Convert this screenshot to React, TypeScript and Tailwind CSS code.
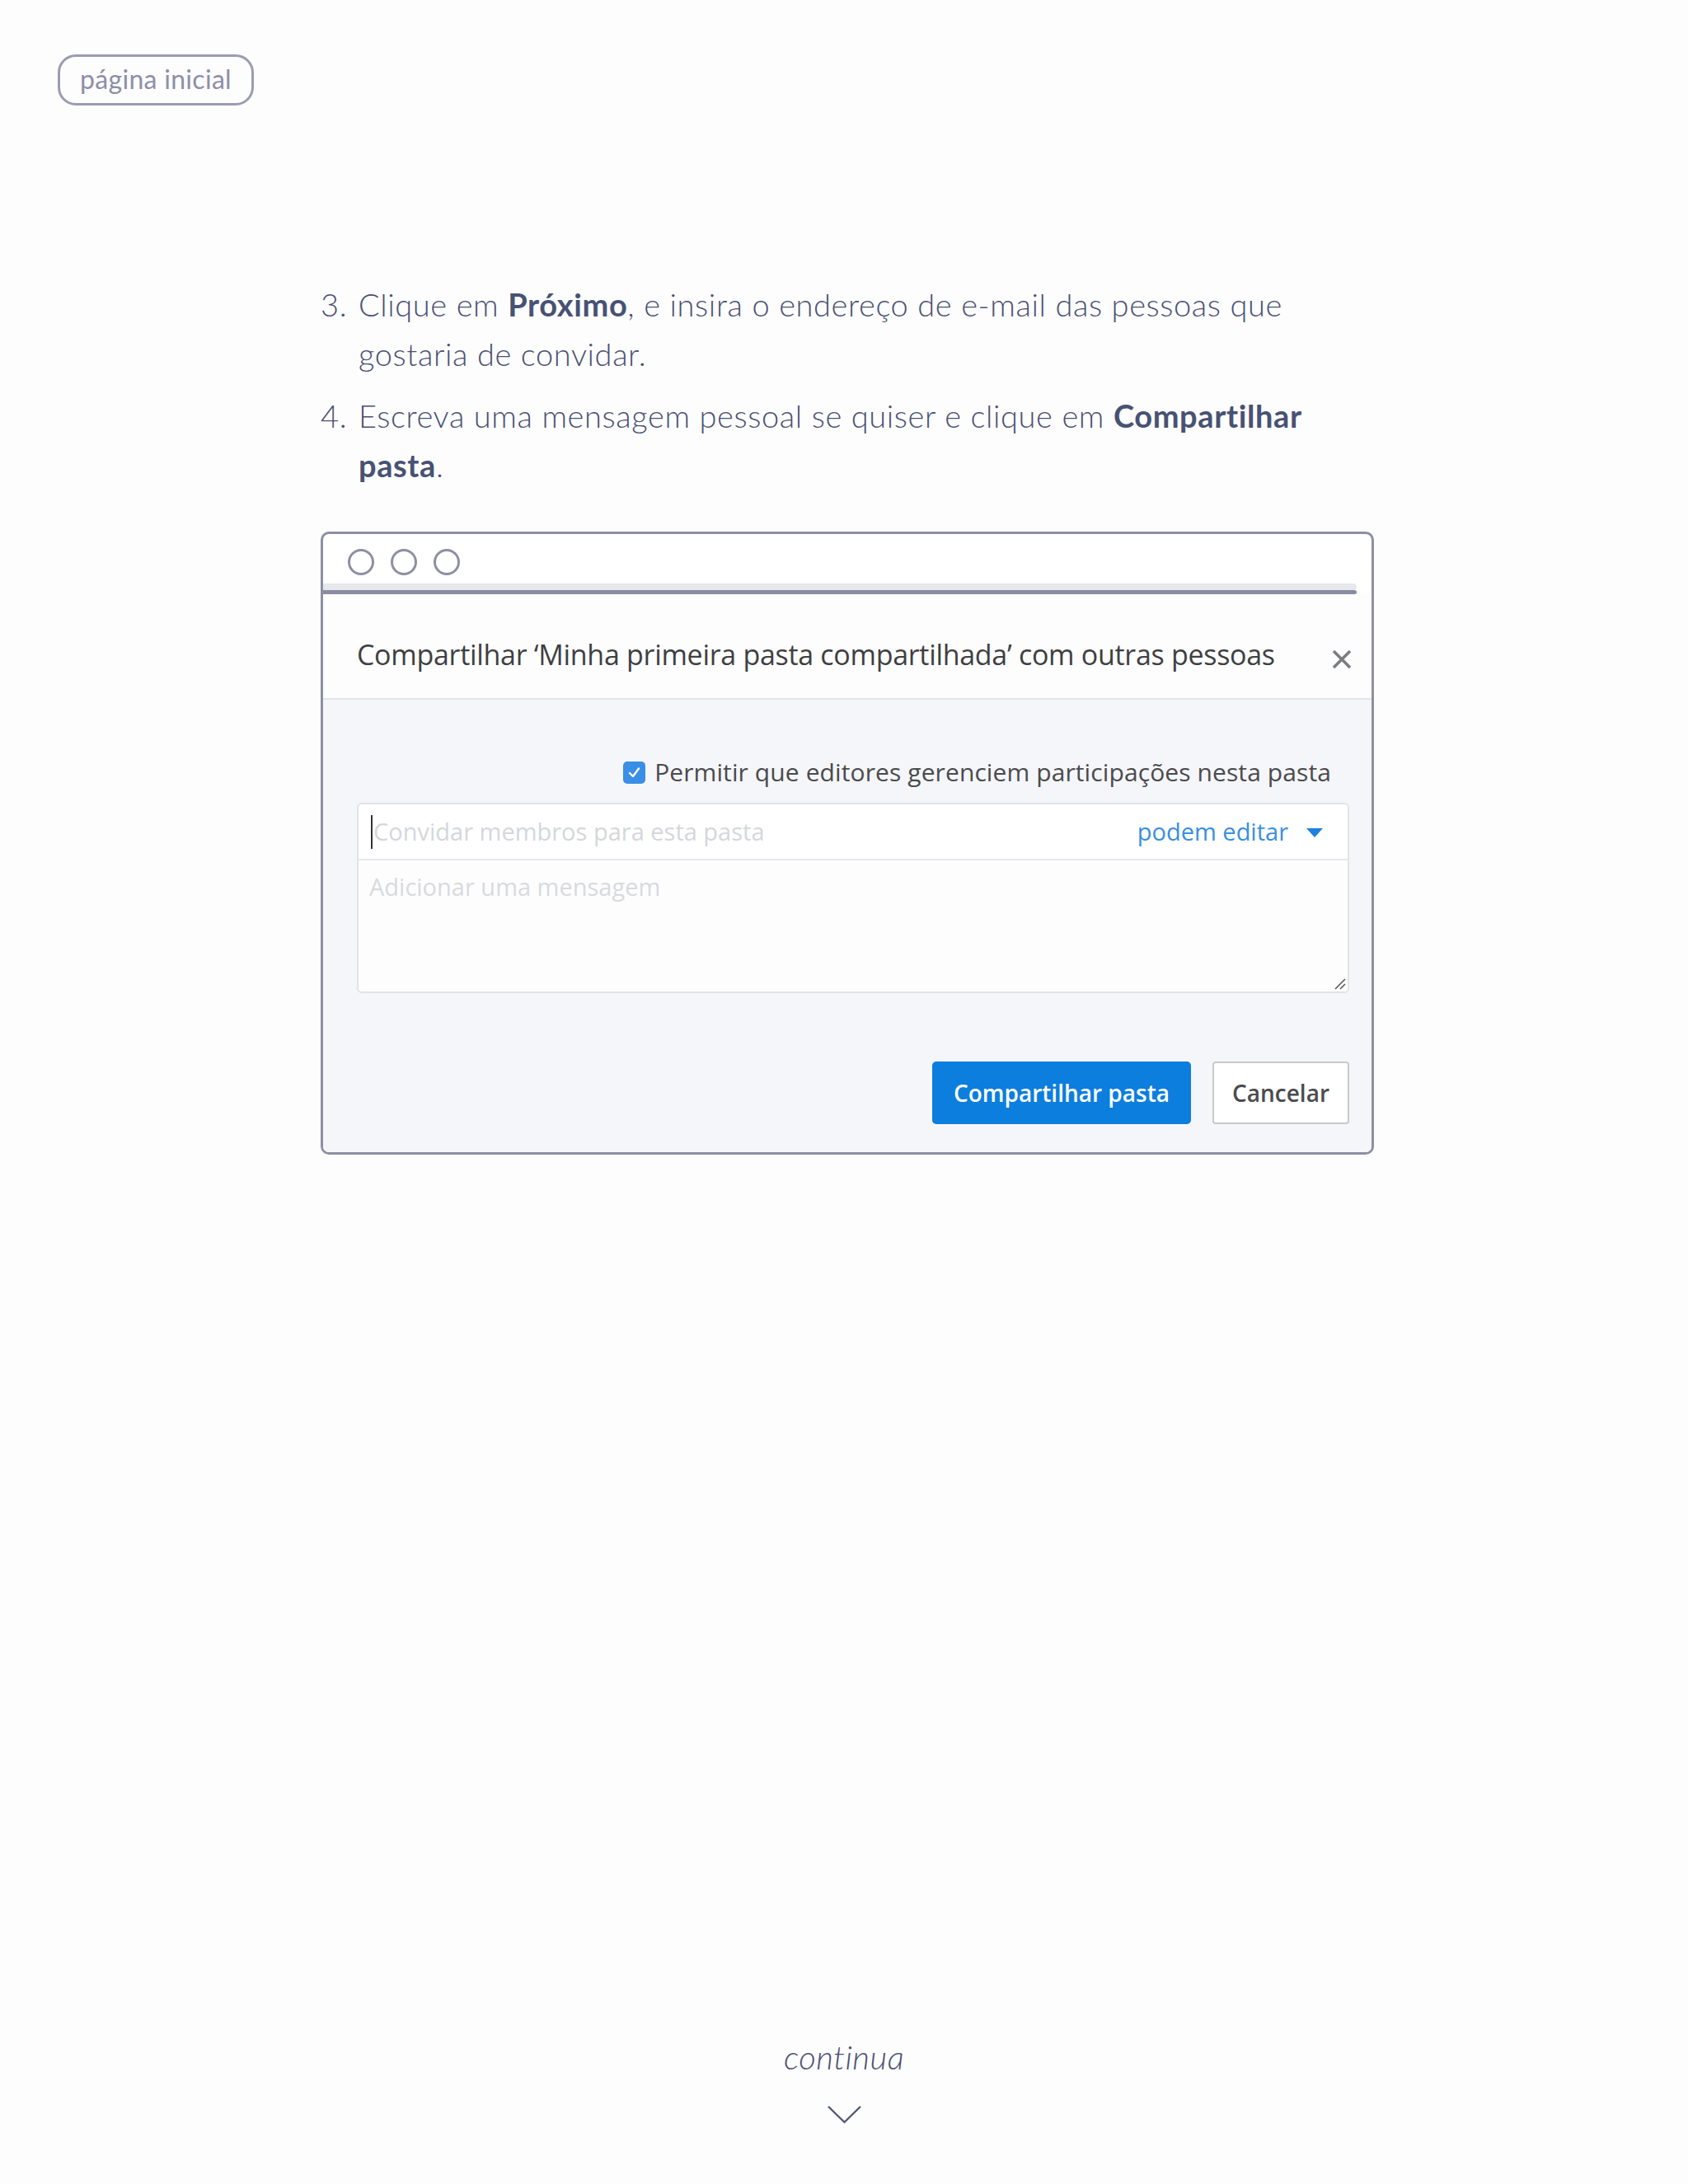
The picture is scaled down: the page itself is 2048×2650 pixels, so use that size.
import React from "react";

const SANS = "font-['Lato','Liberation_Sans',sans-serif]";
const OPEN = "font-['Open_Sans','Liberation_Sans',sans-serif]";

function WindowDots() {
  return (
    <div className="flex items-center gap-[20px] h-[60px] pt-[8px] pl-[30px]">
      {[0, 1, 2].map((i) => (
        <div key={i} className="w-[32px] h-[32px] rounded-full border-[3px] border-[#8e8fa3]" />
      ))}
    </div>
  );
}

function ShareDialog() {
  return (
    <div className={`${OPEN} w-[1278px] border-[3px] border-[#8e8fa3] rounded-[10px] bg-white overflow-hidden`}>
      <WindowDots />
      <div className="h-[8px] bg-[#e7e8ec] mr-[18px] rounded-r-full" />
      <div className="h-[5px] bg-[#8a8ca1] mr-[18px] rounded-r-full" />

      {/* header */}
      <div className="flex items-start justify-between bg-[#fdfdfe] pl-[41px] pr-[24px] pt-[50px] pb-[30px] border-b-2 border-[#e3e5e9]">
        <h2 className="text-[34px] leading-[46px] tracking-[-0.3px] text-[#3f3f42]">
          Compartilhar ‘Minha primeira pasta compartilhada’ com outras pessoas
        </h2>
        <svg className="mt-[17px]" width="24" height="24" viewBox="0 0 24 24">
          <path d="M2 2 L22 22 M22 2 L2 22" stroke="#7b7c80" strokeWidth="3.5" />
        </svg>
      </div>

      {/* body */}
      <div className="bg-[#f5f6fa] pl-[41px] pr-[27px] pt-[68px] pb-[34px]">
        <div className="flex items-center justify-end gap-[11px] pr-[22px] h-[40px] mb-[17px]">
          <div className="w-[27px] h-[27px] rounded-[5px] bg-[#3a8ee6] flex items-center justify-center">
            <svg width="17" height="17" viewBox="0 0 17 17">
              <path d="M3 9 L7 13 L14 3.5" stroke="#fff" strokeWidth="2.4" fill="none" strokeLinecap="round" strokeLinejoin="round" />
            </svg>
          </div>
          <span className="text-[30px] leading-[40px] tracking-[0.1px] text-[#4a4a4d]">
            Permitir que editores gerenciem participações nesta pasta
          </span>
        </div>

        <div className="border-2 border-[#e1e3e7] rounded-[6px] bg-white overflow-hidden">
          <div className="flex items-center h-[68px] pl-[15px] pr-[30px] border-b-2 border-[#e6e8eb]">
            <div className="w-[2px] h-[41px] bg-[#333]" />
            <span className="flex-1 text-[29px] text-[#d5d7dc] pl-[1px]">Convidar membros para esta pasta</span>
            <span className="text-[29px] text-[#3a8fe2]">podem editar</span>
            <svg className="ml-[22px] mt-[4px]" width="20" height="12" viewBox="0 0 20 12">
              <path d="M0 0 H20 L10 11 Z" fill="#1b80e0" />
            </svg>
          </div>
          <div className="relative h-[159px] bg-[#fdfdfe] pl-[13px] pt-[11px]">
            <span className="text-[29px] leading-[41px] text-[#d8dade]">Adicionar uma mensagem</span>
            <svg className="absolute right-[2px] bottom-[2px]" width="16" height="16" viewBox="0 0 16 16">
              <path d="M3 15 L15 3 M9 15 L15 9" stroke="#555" strokeWidth="1.5" />
            </svg>
          </div>
        </div>

        <div className="flex justify-end gap-[26px] mt-[83px]">
          <button className="w-[314px] h-[76px] rounded-[5px] bg-[#0c7edd] text-white text-[28px] font-semibold">
            Compartilhar pasta
          </button>
          <button className="w-[166px] h-[76px] rounded-[4px] bg-white border-2 border-[#c9c9cc] text-[#4b4b4e] text-[28px] font-semibold">
            Cancelar
          </button>
        </div>
      </div>
    </div>
  );
}

function Step({ n, children, className = "" }: { n: string; children: React.ReactNode; className?: string }) {
  return (
    <div className={`flex ${className}`}>
      <span className="w-[46px] shrink-0">{n}</span>
      <p className="flex-1">{children}</p>
    </div>
  );
}

export default function App() {
  return (
    <div className={`${SANS} min-h-[2650px] bg-[#fdfdfe] flex flex-col`}>
      <div className="pt-[66px] pl-[70px]">
        <a className="inline-flex items-center justify-center w-[238px] h-[62px] pb-[2px] rounded-[22px] border-[3px] border-[#9b9cb0] text-[32px] tracking-[0.3px] text-[#8d8fa8]">
          página inicial
        </a>
      </div>

      <div className="ml-[389px] w-[1280px] mt-[211px]">
        <div className="text-[38px] leading-[60px] font-light tracking-[0.6px] text-[#4b5073]">
          <Step n="3.">
            Clique em <b className="font-bold text-[#485273]">Próximo</b>, e insira o endereço de e-mail das pessoas que gostaria de convidar.
          </Step>
          <Step n="4." className="mt-[15px]">
            Escreva uma mensagem pessoal se quiser e clique em <b className="font-bold text-[#485273]">Compartilhar pasta</b>.
          </Step>
        </div>

        <div className="mt-[51px]">
          <ShareDialog />
        </div>
      </div>

      <div className="mt-[1073px] flex flex-col items-center">
        <span className="text-[40px] leading-[44px] italic font-light tracking-[0.5px] text-[#4b5073]">continua</span>
        <svg className="mt-[37px]" width="41" height="22" viewBox="0 0 41 22">
          <path d="M1 1 L20.5 20 L40 1" stroke="#4b5073" strokeWidth="2.2" fill="none" />
        </svg>
      </div>
    </div>
  );
}
